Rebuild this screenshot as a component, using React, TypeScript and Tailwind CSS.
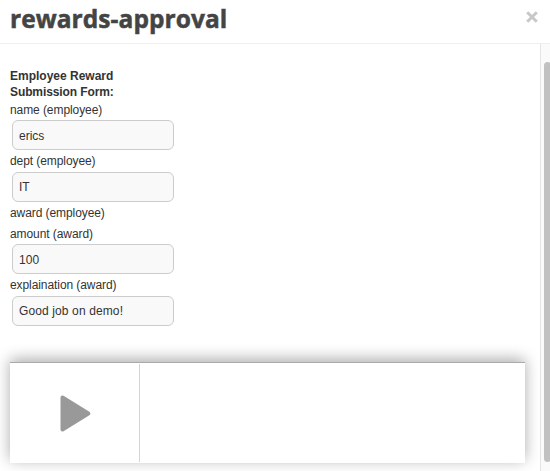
type FieldProps = { label: string; value: string; className: string; inputClassName: string };

function Field({ label, value, className, inputClassName }: FieldProps) {
  return (
    <div className={className}>
      <label className="block text-[12px] leading-[20px] tracking-[-0.08px]">{label}</label>
      <input
        readOnly
        value={value}
        className={`ml-[2px] block h-[30px] w-[162px] rounded-[6px] border border-[#cccccc] bg-[#f9f9f9] px-[6px] text-[12px] text-[#333] outline-none ${inputClassName}`}
      />
    </div>
  );
}

export default function App() {
  return (
    <div className="flex h-[471px] w-[550px] flex-col overflow-hidden bg-white font-['Liberation_Sans',Arial,sans-serif] text-[#333]">
      <header className="flex h-[44px] shrink-0 items-start justify-between border-b border-[#eeeeee] pl-[10px] pr-[12px]">
        <h1 className="whitespace-nowrap pt-[3px] font-['Open_Sans',sans-serif] text-[24.5px] font-bold leading-[32px] tracking-[0.06px] text-[#444] [-webkit-text-stroke:0.5px_#444]">
          rewards-approval
        </h1>
        <svg className="mt-[11px] h-[12px] w-[12px]" viewBox="0 0 12 12" aria-label="Close">
          <path d="M1.2 1.2 10.8 10.8M10.8 1.2 1.2 10.8" stroke="#c8c8c8" strokeWidth="3" />
        </svg>
      </header>
      <div className="flex min-h-0 flex-1">
        <main className="w-[540px] shrink-0 pl-[10px]">
          <h2 className="w-[110px] pt-[24px] text-[12px] font-bold leading-[16px]">
            Employee Reward <span className="tracking-[-0.1px]">Submission Form:</span>
          </h2>
          <Field label="name (employee)" value="erics" className="" inputClassName="pt-[2px]" />
          <Field label="dept (employee)" value="IT" className="mt-px" inputClassName="mt-px" />
          <div className="mt-px h-[20px] text-[12px] leading-[20px] tracking-[-0.08px]">award (employee)</div>
          <Field label="amount (award)" value="100" className="mt-px" inputClassName="pt-[2px] tracking-[0.1px]" />
          <Field label="explaination (award)" value="Good job on demo!" className="mt-px" inputClassName="mt-px tracking-[0.12px]" />
          <section className="mt-[36px] flex h-[101px] w-[515px] border-t border-[#aaaaaa] bg-white shadow-[0_-3px_14px_rgba(0,0,0,0.33)]">
            <button className="mt-px flex h-[98px] w-[130px] items-center justify-center border-r border-[#d4d4d4]" aria-label="Start">
              <svg className="ml-[2px] mt-[2px] h-[38px] w-[32px]" viewBox="0 0 32 38">
                <path d="M2.5 2.5V34.5L28.3 18.5Z" fill="#999" stroke="#999" strokeWidth="4" strokeLinejoin="round" />
              </svg>
            </button>
          </section>
        </main>
        <aside className="flex w-[10px] shrink-0 border-l border-[#e4e4e4] bg-[#fafafa] pl-[3px] pt-[18px]">
          <div className="h-[400px] w-[7px] shrink-0 rounded-[4px] bg-[#c1c1c1]" />
        </aside>
      </div>
    </div>
  );
}
